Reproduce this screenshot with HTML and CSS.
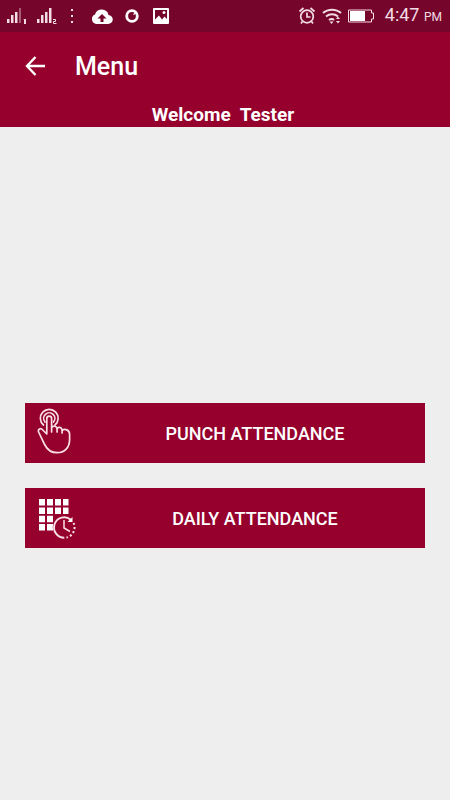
FILE: index.html
```
<!DOCTYPE html>
<html lang="en">
<head>
    <meta charset="UTF-8">
    <meta name="viewport" content="width=device-width, initial-scale=1.0">
    <title>Menu</title>
    <link rel="stylesheet" href="styles.css">
</head>
<body>
    <div class="status-bar">
        <div class="status-left">
            <svg width="20" height="18" viewBox="0 0 20 18" fill="#f3dce3">
                <path d="M0 12h2.500v4H0zM4 8h2.500v8H4zM8 5h2.500v11H8z"/>
                <path d="M12 1h2v15h-2z" opacity=".4"/>
                <path d="M16 13l1.500-1H19v5h-2v-4z"/>
            </svg>
            <svg width="20" height="18" viewBox="0 0 20 18" fill="#f3dce3">
                <path d="M0 12h2.500v4H0zM4 8h2.500v8H4zM8 5h2.500v11H8zM12 1h2.500v15H12z"/>
                <path d="M16 12.500h2.500v2h-2v2H19.500" fill="none" stroke="#f3dce3"/>
            </svg>
            <svg class="dots" width="4" height="18" viewBox="0 0 4 18" fill="#f3dce3">
                <path d="M1 2h2v2H1zM1 8h2v2H1zM1 14h2v2H1z"/>
            </svg>
            <svg class="cloud" width="22" height="18" viewBox="0 0 22 18">
                <path d="M5 17a5 5 0 0 1-1-9.500A7 7 0 0 1 17.500 8 4.500 4.500 0 0 1 17 17z" fill="#fff"/>
                <path d="M11 15V9" stroke="#75052a" stroke-width="3"/>
                <path d="M6.500 11.500h9L11 7z" fill="#75052a"/>
            </svg>
            <svg class="ring" width="14" height="18" viewBox="0 0 14 18">
                <circle cx="7" cy="9" r="5.300" fill="none" stroke="#fff" stroke-width="2.800"/>
                <path d="M8 8l1.500-3 1.500 2z" fill="#fff"/>
            </svg>
            <svg class="photo" width="18" height="18" viewBox="0 0 18 18">
                <rect x="1" y="1" width="16" height="16" rx="1" fill="#fff"/>
                <path d="M3 3h12v9l-2.500-2.500-2.500 3-3-4-4 4z" fill="#75052a"/>
                <circle cx="12" cy="5.500" r="1.500" fill="#fff"/>
            </svg>
        </div>
        <div class="status-right">
            <svg width="18" height="18" viewBox="0 0 18 18" fill="none" stroke="#f3dce3" stroke-width="1.700">
                <circle cx="9" cy="9.500" r="6.300"/>
                <path d="M1.500 4.500l4-3.500M16.500 4.500l-4-3.500M9 5.500V10h3.500M4.500 14.500L3 16.500M13.500 14.500l1.500 2"/>
            </svg>
            <svg width="20" height="18" viewBox="0 0 20 18" fill="none" stroke="#f3dce3" stroke-width="2">
                <path d="M1 6c5-4.500 13-4.500 18 0M4 9.500c3.500-3 8.500-3 12 0M7 13c2-1.500 3.500-1.500 5 0"/>
                <path d="M7.500 14.500h4L9.500 17z" fill="#f3dce3" stroke="none"/>
                <path d="M14 12l2-2.500 2 2.500zM14 14l2 2.500 2-2.500z" fill="#f3dce3" stroke="none"/>
            </svg>
            <svg width="27" height="18" viewBox="0 0 27 18">
                <path d="M.500 3h23v3h2v6h-2v3H.500z" fill="none" stroke="#f3dce3"/>
                <rect x="2" y="4" width="15" height="10" fill="#fff"/>
            </svg>
            <span class="clock">4:47 <small>PM</small></span>
        </div>
    </div>

    <header class="header">
        <div class="toolbar">
            <button class="back" type="button" aria-label="Back">
                <svg width="20" height="20" viewBox="0 0 20 20" fill="none" stroke="#fff" stroke-width="2.400">
                    <path d="M20 10H2M10.500 1L2 10l8.500 9"/>
                </svg>
            </button>
            <h1>Menu</h1>
        </div>
        <p class="welcome">Welcome&nbsp; Tester</p>
    </header>

    <main class="menu">
        <button class="menu-item" type="button">
            <svg width="60" height="60" viewBox="0 0 60 60" fill="none" stroke="#fbdfe8" stroke-width="1.700" stroke-linejoin="round" stroke-linecap="round">
                <path d="M18.500 22a8.900 8.900 0 1 1 11.500 0"/>
                <path d="M20 19a5.600 5.600 0 1 1 8.500 0"/>
                <path d="M21.800 30V15.500a2.400 2.400 0 0 1 4.800 0V29M26.600 25c1-2.500 5-2.500 5.500 1v3M32.100 25.500c1-1.800 4.500-1.500 5 1.500v3M37.100 27.500c2.500-2 7.500-1 7.500 4v5c0 8-5 13.200-12.500 13.200-6.500 0-10-3.200-12.500-8.200l-6-12.500c-1-3 2-4.500 4.200-2l4 4"/>
            </svg>
            <span>PUNCH ATTENDANCE</span>
        </button>
        <button class="menu-item" type="button">
            <svg width="60" height="60" viewBox="0 0 60 60">
                <path d="M14 11h6v6.500h-6zM22 11h6v6.500h-6zM30 11h6v6.500h-6zM38 11h5.500v6.500H38zM14 19.500h6V26h-6zM22 19.500h6V26h-6zM30 19.500h6V26h-6zM38 19.500h5.500V26H38zM14 27.700h6v6.500h-6zM22 27.700h6v6.500h-6zM14 36h6v6.500h-6zM22 36h6v6.500h-6z" fill="#fff"/>
                <circle cx="39.300" cy="39.500" r="11.500" fill="#95002d"/>
                <g fill="none" stroke="#fbdfe8" stroke-width="1.900">
                    <path d="M39.300 49.700a10.200 10.200 0 1 1 6.500-18"/>
                    <path d="M48.500 35a10.200 10.200 0 0 1-7 14.500" stroke-width="2" stroke-dasharray="2 2.200"/>
                    <path d="M39 32v8l6 3.500" stroke-width="1.500"/>
                </g>
                <path d="M47.500 29v5h-5z" fill="#fff"/>
            </svg>
            <span>DAILY ATTENDANCE</span>
        </button>
    </main>
</body>
</html>
```
FILE: styles.css
```
* {
    box-sizing: border-box;
}

body {
    margin: 0;
    min-height: 100vh;
    display: flex;
    flex-direction: column;
    background: #eeeeee;
    color: #ffffff;
    font-family: Roboto, "Liberation Sans", sans-serif;
}

svg {
    display: block;
    flex: none;
}

/* Phone status bar */
.status-bar {
    display: flex;
    justify-content: space-between;
    height: 32px;
    padding: 0 8px 0 7px;
    background: #75052a;
}

.status-left,
.status-right {
    display: flex;
    align-items: center;
}

.status-left {
    gap: 10px;
}

.status-left .dots {
    margin-left: 3px;
}

.status-left .cloud {
    margin-left: 7px;
}

.status-left .ring {
    margin-left: 2px;
}

.status-left .photo {
    margin-left: 3px;
}

.status-right {
    gap: 6px;
}

.clock {
    margin-left: 4px;
    font-size: 18px;
    line-height: 34px;
    color: #f3dce3;
}

.clock small {
    font-size: 12px;
}

/* Header */
.header {
    background: #95002d;
}

.toolbar {
    display: flex;
    align-items: center;
    height: 70px;
    padding: 0 25px 2px;
    gap: 30px;
}

.back {
    padding: 0;
    border: 0;
    background: none;
    cursor: pointer;
}

.toolbar h1 {
    margin: 0;
    font-size: 25px;
    font-weight: 500;
}

.welcome {
    margin: 0;
    padding-right: 4px;
    font-size: 19px;
    font-weight: 700;
    line-height: 25px;
    text-align: center;
}

/* Menu buttons */
.menu {
    flex: 1;
    display: flex;
    flex-direction: column;
    justify-content: center;
    gap: 25px;
    padding: 24px 25px 0;
}

.menu-item {
    display: flex;
    align-items: center;
    width: 100%;
    height: 60px;
    padding: 0;
    border: 0;
    background: #95002d;
    color: #ffffff;
    font-family: inherit;
    font-size: 18px;
    font-weight: 500;
    cursor: pointer;
}

.menu-item span {
    flex: 1;
    text-align: center;
}
```
